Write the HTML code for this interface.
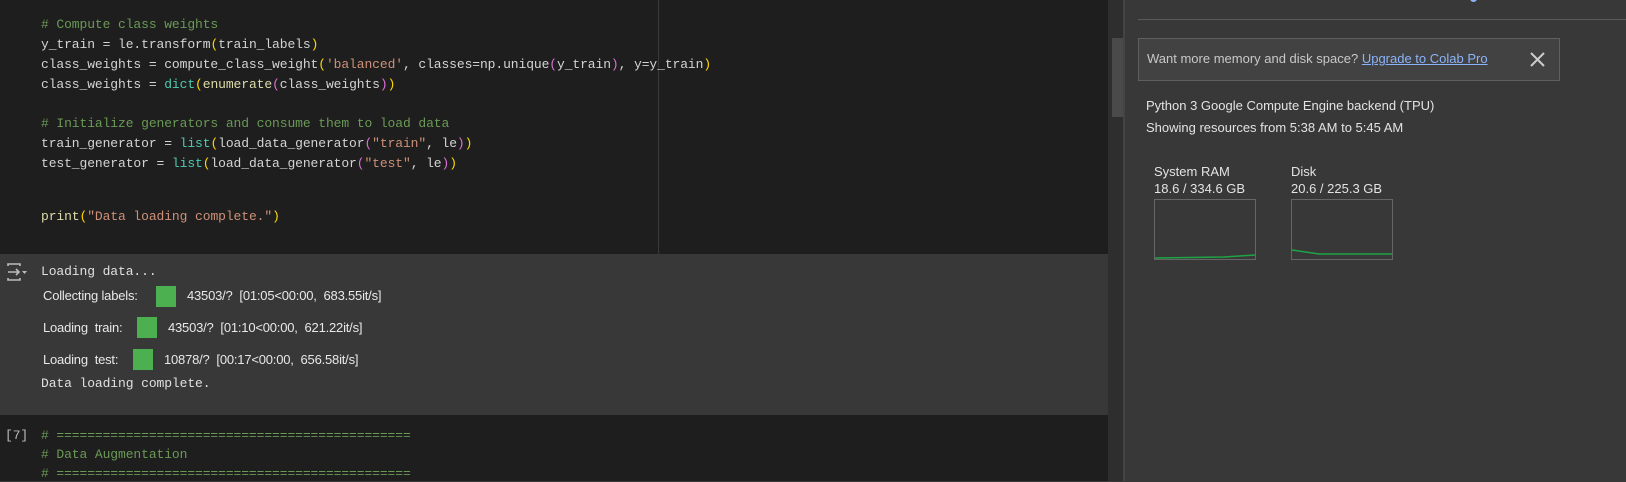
<!DOCTYPE html>
<html><head><meta charset="utf-8"><style>
*{margin:0;padding:0;box-sizing:border-box}
body{width:1626px;height:481px;background:#383838;position:relative;overflow:hidden;font-family:"Liberation Sans",Arial,sans-serif}
.ed{position:absolute;left:0;top:0;width:1108px;height:254px;background:#1e1e1e}
.out{position:absolute;left:0;top:254px;width:1108px;height:161px;background:#383838}
.ed2{position:absolute;left:0;top:415px;width:1108px;height:66px;background:#1e1e1e}
.m{position:absolute;left:41px;font-family:"Liberation Mono",monospace;font-size:13px;color:#d4d4d4;white-space:pre;line-height:16px;letter-spacing:-0.1px}
.c{color:#6a9955}.s{color:#ce9178}.f{color:#dcdcaa}.b{color:#4ec9b0}.y{color:#ffd700}.p{color:#da70d6}
.t{position:absolute;font-size:13px;color:#e8e8e8;white-space:pre;line-height:15px;letter-spacing:-0.2px}
.g{position:absolute;width:20px;height:21px;background:#4caf50}
.r{position:absolute;color:#e3e3e3;font-size:13px;white-space:pre;line-height:16px}
</style></head><body>
<div class="ed"></div>
<div style="position:absolute;left:658px;top:0;width:1px;height:254px;background:#3a3a3a"></div>
<div class="out"></div>
<div class="ed2"></div>
<div style="position:absolute;left:1108px;top:0;width:15px;height:481px;background:#2e2e2e"></div>
<div style="position:absolute;left:1112px;top:38px;width:11px;height:79px;background:#4a4a4a"></div>
<div style="position:absolute;left:1123px;top:0;width:2px;height:481px;background:#444"></div>

<div class="m" style="top:17px"><span class="c"># Compute class weights</span></div>
<div class="m" style="top:37px">y_train = le.transform<span class="y">(</span>train_labels<span class="y">)</span></div>
<div class="m" style="top:57px">class_weights = compute_class_weight<span class="y">(</span><span class="s">'balanced'</span>, classes=np.unique<span class="p">(</span>y_train<span class="p">)</span>, y=y_train<span class="y">)</span></div>
<div class="m" style="top:77px">class_weights = <span class="b">dict</span><span class="y">(</span><span class="f">enumerate</span><span class="p">(</span>class_weights<span class="p">)</span><span class="y">)</span></div>
<div class="m" style="top:116px"><span class="c"># Initialize generators and consume them to load data</span></div>
<div class="m" style="top:136px">train_generator = <span class="b">list</span><span class="y">(</span>load_data_generator<span class="p">(</span><span class="s">"train"</span>, le<span class="p">)</span><span class="y">)</span></div>
<div class="m" style="top:156px">test_generator = <span class="b">list</span><span class="y">(</span>load_data_generator<span class="p">(</span><span class="s">"test"</span>, le<span class="p">)</span><span class="y">)</span></div>
<div class="m" style="top:209px"><span class="f">print</span><span class="y">(</span><span class="s">"Data loading complete."</span><span class="y">)</span></div>

<svg style="position:absolute;left:6px;top:262px" width="22" height="20" viewBox="0 0 22 20" fill="none" stroke="#bbb" stroke-width="1.6">
<path d="M2 4V2h12v2M2 16v2h12v-2M2 10h11M10 7l3 3-3 3"/><path d="M16 9h5l-2.5 3z" fill="#bbb" stroke="none"/></svg>
<div class="m" style="top:264px;color:#e0e0e0">Loading data...</div>
<div class="t" style="left:43px;top:288px">Collecting labels:</div>
<div class="g" style="left:156px;top:286px"></div>
<div class="t" style="left:187px;top:288px">43503/?  [01:05&lt;00:00,  683.55it/s]</div>
<div class="t" style="left:43px;top:320px">Loading  train:</div>
<div class="g" style="left:137px;top:317px"></div>
<div class="t" style="left:168px;top:320px">43503/?  [01:10&lt;00:00,  621.22it/s]</div>
<div class="t" style="left:43px;top:352px">Loading  test:</div>
<div class="g" style="left:133px;top:349px"></div>
<div class="t" style="left:164px;top:352px">10878/?  [00:17&lt;00:00,  656.58it/s]</div>
<div class="m" style="top:376px;color:#e0e0e0">Data loading complete.</div>

<div class="m" style="left:5px;top:428px;color:#bbb">[7]</div>
<div class="m" style="top:428px"><span class="c"># ==============================================</span></div>
<div class="m" style="top:447px"><span class="c"># Data Augmentation</span></div>
<div class="m" style="top:466px"><span class="c"># ==============================================</span></div>

<div style="position:absolute;left:1470px;top:-6px;width:7px;height:8px;border:2px solid #8ab4f8;border-top:none;border-radius:0 0 4px 4px"></div>
<div style="position:absolute;left:1138px;top:19px;width:488px;height:1px;background:#5a5a5a"></div>
<div style="position:absolute;left:1138px;top:38px;width:422px;height:43px;background:#424242;border:1px solid #5f5f5f"></div>
<div class="r" style="left:1147px;top:51px;color:#c8c8c8">Want more memory and disk space? <span style="color:#8ab4f8;text-decoration:underline">Upgrade to Colab Pro</span></div>
<svg style="position:absolute;left:1530px;top:52px" width="15" height="15" stroke="#ccc" stroke-width="2"><path d="M1 1L14 14M14 1L1 14"/></svg>
<div class="r" style="left:1146px;top:98px">Python 3 Google Compute Engine backend (TPU)</div>
<div class="r" style="left:1146px;top:120px">Showing resources from 5:38 AM to 5:45 AM</div>
<div class="r" style="left:1154px;top:164px">System RAM</div>
<div class="r" style="left:1154px;top:181px">18.6 / 334.6 GB</div>
<div class="r" style="left:1291px;top:164px">Disk</div>
<div class="r" style="left:1291px;top:181px">20.6 / 225.3 GB</div>
<svg style="position:absolute;left:1154px;top:199px" width="103" height="62"><rect x="0.5" y="0.5" width="101" height="60" fill="none" stroke="#666"/><path d="M1 59L70 58L101 56" stroke="#1ea446" stroke-width="1.5" fill="none"/></svg>
<svg style="position:absolute;left:1291px;top:199px" width="103" height="62"><rect x="0.5" y="0.5" width="101" height="60" fill="none" stroke="#666"/><path d="M1 51L28 55L101 55" stroke="#1ea446" stroke-width="1.5" fill="none"/></svg>
</body></html>
